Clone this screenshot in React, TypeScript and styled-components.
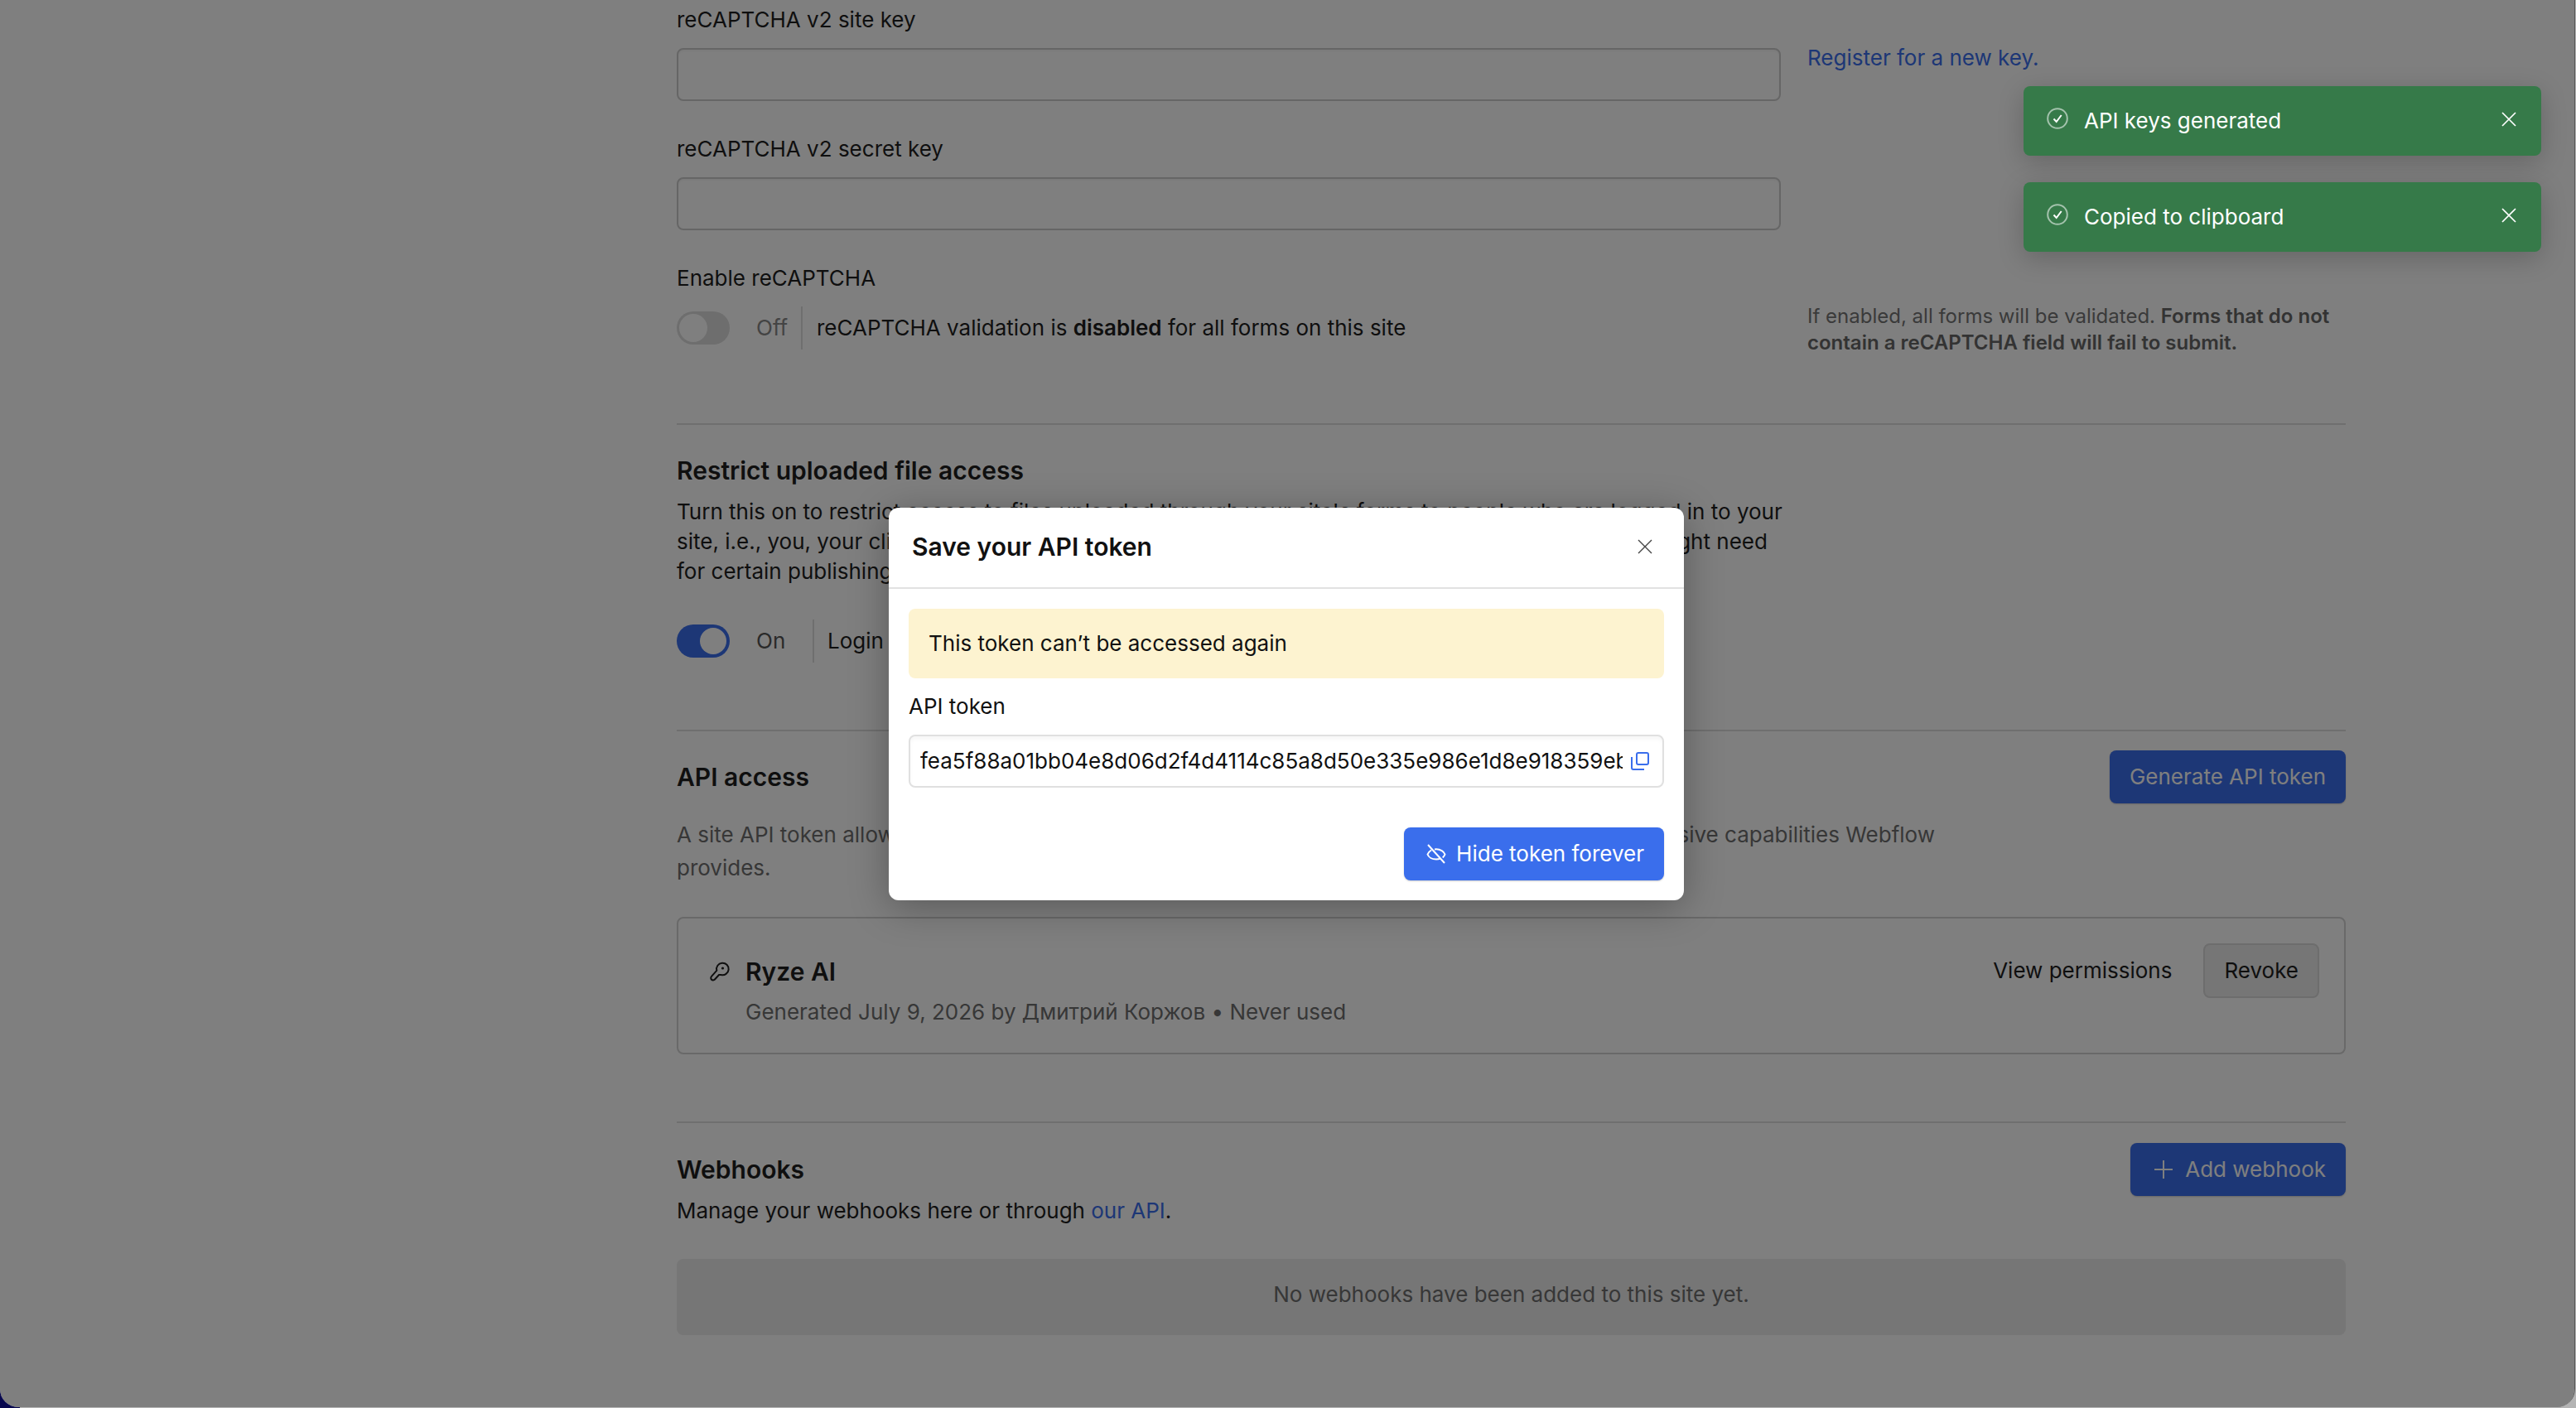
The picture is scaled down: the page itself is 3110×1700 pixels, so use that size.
import React from "react";
import styled, { createGlobalStyle } from "styled-components";

const Global = createGlobalStyle`
  html, body {
    margin: 0;
    padding: 0;
    width: 3110px;
    height: 1700px;
    overflow: hidden;
    background: linear-gradient(90deg, #08084f 24px, #b4b4b4 24px);
  }
  * { box-sizing: border-box; }
`;

const Window = styled.div`
  position: relative;
  width: 3109px;
  height: 1699px;
  overflow: hidden;
  background: #fff;
  border-right: 1px solid #555;
  border-radius: 0 0 22px 22px;
  font-family: Inter, "Noto Sans", sans-serif;
  font-size: 26px;
  line-height: 36px;
  color: #1e1e1e;
`;

const Content = styled.div`
  width: 2015px;
  margin-left: 817px;
  padding-top: 6px;
`;

const FieldGrid = styled.div`
  display: grid;
  grid-template-columns: 1333px 650px;
  column-gap: 32px;
`;

const Field = styled.div<{ $mt?: number }>`
  margin-top: ${(p) => p.$mt ?? 0}px;
`;

const Label = styled.div`
  height: 36px;
`;

const TextInput = styled.div`
  height: 64px;
  margin-top: 16px;
  background: #fff;
  border: 2px solid #ccc;
  border-radius: 8px;
  box-shadow: inset 0 2px 3px rgba(0, 0, 0, 0.04);
`;

const Link = styled.a`
  color: #3a6eec;
  text-decoration: none;
`;

const SideLink = styled.div`
  margin-top: 46px;
`;

const SideNote = styled.div`
  margin-top: 88px;
  font-size: 24px;
  line-height: 32px;
  color: #757575;

  strong {
    font-weight: 600;
    color: #666;
  }
`;

const ToggleRow = styled.div<{ $mt: number }>`
  display: flex;
  align-items: center;
  height: 52px;
  margin-top: ${(p) => p.$mt}px;
`;

const Toggle = styled.div<{ $on?: boolean }>`
  display: flex;
  flex: none;
  justify-content: ${(p) => (p.$on ? "flex-end" : "flex-start")};
  align-items: center;
  width: 64px;
  height: 40px;
  padding: 0 ${(p) => (p.$on ? 4 : 3)}px;
  background: ${(p) => (p.$on ? "#3a6eec" : "#dcdcdc")};
  border-radius: 20px;
`;

const Knob = styled.div<{ $on?: boolean }>`
  width: ${(p) => (p.$on ? 32 : 34)}px;
  height: ${(p) => (p.$on ? 32 : 34)}px;
  background: #fff;
  border-radius: 50%;
`;

const ToggleState = styled.span<{ $w: number }>`
  width: ${(p) => p.$w}px;
  margin-left: 32px;
  color: #888;
`;

const ToggleOnState = styled(ToggleState)`
  color: #555;
`;

const VerticalRule = styled.div`
  width: 2px;
  height: 52px;
  background: #dedede;
`;

const ToggleText = styled.span<{ $ml: number }>`
  margin-left: ${(p) => p.$ml}px;
  white-space: nowrap;

  strong {
    font-weight: 600;
  }
`;

const Rule = styled.hr<{ $mt: number }>`
  height: 2px;
  margin: ${(p) => p.$mt}px 0 0;
  background: #dedede;
  border: 0;
`;

const Heading = styled.h2<{ $mt: number }>`
  margin: ${(p) => p.$mt}px 0 0;
  font-size: 30px;
  line-height: 40px;
  font-weight: 600;
  color: #1e1e1e;
`;

const Paragraph = styled.p`
  margin: 12px 0 0;
  white-space: nowrap;
`;

const HeaderRow = styled.div<{ $mt: number }>`
  display: flex;
  justify-content: space-between;
  align-items: center;
  height: 64px;
  margin-top: ${(p) => p.$mt}px;

  ${Heading} {
    margin: 0;
  }
`;

const PrimaryButton = styled.button`
  display: flex;
  align-items: center;
  gap: 12px;
  height: 64px;
  padding: 0 24px;
  background: #3a6eec;
  border: 0;
  border-radius: 8px;
  box-shadow: 0 1px 2px rgba(0, 0, 0, 0.2);
  font: inherit;
  color: #fff;
  white-space: nowrap;
`;

const AddButton = styled(PrimaryButton)`
  gap: 14px;
  padding: 0 24px 0 28px;
`;

const Muted = styled.p`
  margin: 18px 0 0;
  line-height: 40px;
  color: #6e6e6e;
  white-space: nowrap;
`;

const TokenCard = styled.div`
  display: flex;
  justify-content: space-between;
  align-items: flex-start;
  height: 166px;
  margin-top: 39px;
  padding: 30px 30px 0 38px;
  border: 2px solid #d2d2d2;
  border-radius: 8px;
`;

const TokenInfo = styled.div`
  display: grid;
  grid-template-columns: 24px 1fr;
  column-gap: 19px;
  align-items: center;
  margin-top: 14px;
`;

const TokenName = styled.div`
  font-size: 30px;
  line-height: 40px;
  font-weight: 600;
`;

const TokenMeta = styled.div`
  grid-column: 2;
  margin-top: 11px;
  color: #6e6e6e;
  white-space: nowrap;
`;

const TokenActions = styled.div`
  display: flex;
  align-items: center;
  gap: 38px;
`;

const RevokeButton = styled.button`
  height: 66px;
  padding: 0 23px;
  background: #ececec;
  border: 2px solid #dadada;
  border-radius: 8px;
  font: inherit;
  color: #1e1e1e;
`;

const Manage = styled.p`
  margin: 0;
`;

const EmptyState = styled.div`
  display: flex;
  justify-content: center;
  align-items: center;
  height: 92px;
  margin-top: 40px;
  padding-bottom: 6px;
  background: #ececec;
  border-radius: 8px;
  color: #6e6e6e;
`;

const Overlay = styled.div`
  position: absolute;
  inset: 0 2px 0 0;
  display: flex;
  justify-content: center;
  align-items: center;
  background: rgba(0, 0, 0, 0.5);
`;

const OverlayEdge = styled.div`
  position: absolute;
  top: 0;
  right: 0;
  bottom: 0;
  width: 2px;
  background: rgba(0, 0, 0, 0.5);
`;

const Modal = styled.div`
  display: flex;
  flex-direction: column;
  width: 960px;
  height: 474px;
  background: #fff;
  border-radius: 12px;
  box-shadow: 0 8px 48px rgba(0, 0, 0, 0.3);
`;

const ModalHeader = styled.div`
  display: flex;
  flex: none;
  justify-content: space-between;
  align-items: center;
  height: 98px;
  padding: 0 38px 2px 28px;
  border-bottom: 2px solid #e2e2e2;
`;

const ModalTitle = styled.h3`
  margin: 0;
  font-size: 30px;
  line-height: 40px;
  font-weight: 600;
  color: #111;
`;

const ModalBody = styled.div`
  display: flex;
  flex-direction: column;
  padding: 24px;
`;

const Notice = styled.div`
  display: flex;
  align-items: center;
  height: 84px;
  padding: 0 24px;
  background: #fdf3d0;
  border-radius: 8px;
  color: #111;
`;

const TokenLabel = styled.div`
  margin-top: 16px;
  color: #111;
`;

const TokenField = styled.div`
  display: flex;
  align-items: center;
  gap: 10px;
  height: 64px;
  margin-top: 16px;
  padding: 0 16px 0 12px;
  border: 2px solid #e0e0e0;
  border-radius: 8px;
  box-shadow: inset 0 4px 4px rgba(0, 0, 0, 0.03);
`;

const TokenValue = styled.div`
  flex: 1;
  min-width: 0;
  overflow: hidden;
  white-space: nowrap;
  color: #111;
`;

const ModalFooter = styled.div`
  display: flex;
  justify-content: flex-end;
  margin-top: 48px;
`;

const HideButton = styled(PrimaryButton)`
  padding: 0 24px 0 27px;
`;

const Toasts = styled.div`
  position: absolute;
  top: 104px;
  right: 40px;
  display: flex;
  flex-direction: column;
  gap: 32px;
`;

const Toast = styled.div`
  display: flex;
  align-items: center;
  width: 625px;
  height: 84px;
  padding: 0 30px 0 28px;
  background: #367a49;
  border-radius: 8px;
  box-shadow: 0 8px 32px rgba(0, 0, 0, 0.2);
  color: #fff;
`;

const ToastText = styled.span`
  flex: 1;
  margin-left: 19px;
`;

const ToastIcon = styled.svg`
  flex: none;
  margin-bottom: 6px;
`;

const ToastClose = styled.svg`
  flex: none;
  margin-bottom: 4px;
`;

const IconSvg = styled.svg`
  flex: none;
  display: block;
`;

const CheckCircle = () => (
  <ToastIcon width={26} height={26} viewBox="0 0 26 26" fill="none">
    <circle cx="13" cy="13" r="11.8" stroke="#fff" strokeOpacity={0.55} strokeWidth={2} />
    <path d="M8.5 13.5l3.2 3.5 6-8" stroke="#fff" strokeWidth={2} />
  </ToastIcon>
);

const ToastX = () => (
  <ToastClose width={18} height={18} viewBox="0 0 18 18" fill="none" stroke="#fff" strokeWidth={1.7}>
    <path d="M1 1l16 16M17 1L1 17" />
  </ToastClose>
);

const ModalX = () => (
  <IconSvg width={18} height={18} viewBox="0 0 18 18" fill="none" stroke="#444" strokeWidth={1.4}>
    <path d="M1 1l16 16M17 1L1 17" />
  </IconSvg>
);

const CopyIcon = () => (
  <IconSvg width={22} height={22} viewBox="0 0 22 22" fill="none" stroke="#3a6eec" strokeWidth={2}>
    <rect x="7" y="1" width="14" height="14" rx="2" />
    <path d="M1 6v13a2 2 0 0 0 2 2h13" />
  </IconSvg>
);

const EyeOffIcon = () => (
  <IconSvg width={24} height={24} viewBox="0 0 24 24" fill="none" stroke="#fff" strokeWidth={2}>
    <path d="M6 7.5C3.800 8.800 2 10.800 1.500 12.500c1.200 3.600 5.600 6 10.500 6 1.900 0 3.700-.4 5.200-1.100" />
    <path d="M10 6.500c.7-.1 1.300-.2 2-.2 4.900 0 9.300 2.600 10.500 6.200-.5 1.500-1.500 2.800-2.800 3.900" />
    <path d="M2 1l20 22" />
  </IconSvg>
);

const KeyIcon = () => (
  <IconSvg width={24} height={24} viewBox="0 0 24 24" fill="none" stroke="#1e1e1e" strokeWidth={2}>
    <path d="M8.300 10.800A7.300 7.300 0 1 1 13.500 16H11l-5 5.500c-1 1.100-3 1.200-4 .2s-1-2.800 0-3.800z" />
    <circle cx="15.500" cy="8" r="1.600" fill="#1e1e1e" stroke="none" />
  </IconSvg>
);

const PlusIcon = () => (
  <IconSvg width={24} height={24} viewBox="0 0 24 24" fill="none" stroke="#fff" strokeWidth={2}>
    <path d="M12 1v22M1 12h22" />
  </IconSvg>
);

const TOKEN = "fea5f88a01bb04e8d06d2f4d4114c85a8d50e335e986e1d8e918359eb7c24d1063";

export default function App() {
  return (
    <>
      <Global />
      <Window>
        <Content>
          <FieldGrid>
            <div>
              <Label>reCAPTCHA v2 site key</Label>
              <TextInput />
            </div>
            <SideLink>
              <Link>Register for a new key.</Link>
            </SideLink>
            <Field $mt={40}>
              <Label>reCAPTCHA v2 secret key</Label>
              <TextInput />
            </Field>
            <div />
            <Field $mt={40}>
              <Label>Enable reCAPTCHA</Label>
              <ToggleRow $mt={16}>
                <Toggle>
                  <Knob />
                </Toggle>
                <ToggleState $w={54}>Off</ToggleState>
                <VerticalRule />
                <ToggleText $ml={17}>
                  reCAPTCHA validation is <strong>disabled</strong> for all forms on this site
                </ToggleText>
              </ToggleRow>
            </Field>
            <SideNote>
              If enabled, all forms will be validated. <strong>Forms that do not contain a reCAPTCHA field will fail to submit.</strong>
            </SideNote>
          </FieldGrid>

          <Rule $mt={81} />
          <Heading $mt={35}>Restrict uploaded file access</Heading>
          <Paragraph>
            Turn this on to restrict access to files uploaded through your site's forms to people who are logged in to your
            <br />
            site, i.e., you, your clients, and all other collaborators with the site's published logins, which you might need
            <br />
            for certain publishing workflows.
          </Paragraph>
          <ToggleRow $mt={40}>
            <Toggle $on>
              <Knob $on />
            </Toggle>
            <ToggleOnState $w={68}>On</ToggleOnState>
            <VerticalRule />
            <ToggleText $ml={16}>Login required for uploaded files</ToggleText>
          </ToggleRow>

          <Rule $mt={81} />
          <HeaderRow $mt={23}>
            <Heading $mt={0}>API access</Heading>
            <PrimaryButton>Generate API token</PrimaryButton>
          </HeaderRow>
          <Muted>
            A site API token allows apps and integrations to read and write your site's data with all of the extensive capabilities Webflow
            <br />
            provides.
          </Muted>

          <TokenCard>
            <TokenInfo>
              <KeyIcon />
              <TokenName>Ryze AI</TokenName>
              <TokenMeta>Generated July 9, 2026 by Дмитрий Коржов • Never used</TokenMeta>
            </TokenInfo>
            <TokenActions>
              <span>View permissions</span>
              <RevokeButton>Revoke</RevokeButton>
            </TokenActions>
          </TokenCard>

          <Rule $mt={81} />
          <HeaderRow $mt={24}>
            <Heading $mt={0}>Webhooks</Heading>
            <AddButton>
              <PlusIcon />
              Add webhook
            </AddButton>
          </HeaderRow>
          <Manage>
            Manage your webhooks here or through <Link>our API</Link>.
          </Manage>
          <EmptyState>No webhooks have been added to this site yet.</EmptyState>
        </Content>

        <Overlay>
          <Modal>
            <ModalHeader>
              <ModalTitle>Save your API token</ModalTitle>
              <ModalX />
            </ModalHeader>
            <ModalBody>
              <Notice>This token can’t be accessed again</Notice>
              <TokenLabel>API token</TokenLabel>
              <TokenField>
                <TokenValue>{TOKEN}</TokenValue>
                <CopyIcon />
              </TokenField>
              <ModalFooter>
                <HideButton>
                  <EyeOffIcon />
                  Hide token forever
                </HideButton>
              </ModalFooter>
            </ModalBody>
          </Modal>
        </Overlay>
        <OverlayEdge />

        <Toasts>
          <Toast>
            <CheckCircle />
            <ToastText>API keys generated</ToastText>
            <ToastX />
          </Toast>
          <Toast>
            <CheckCircle />
            <ToastText>Copied to clipboard</ToastText>
            <ToastX />
          </Toast>
        </Toasts>
      </Window>
    </>
  );
}
